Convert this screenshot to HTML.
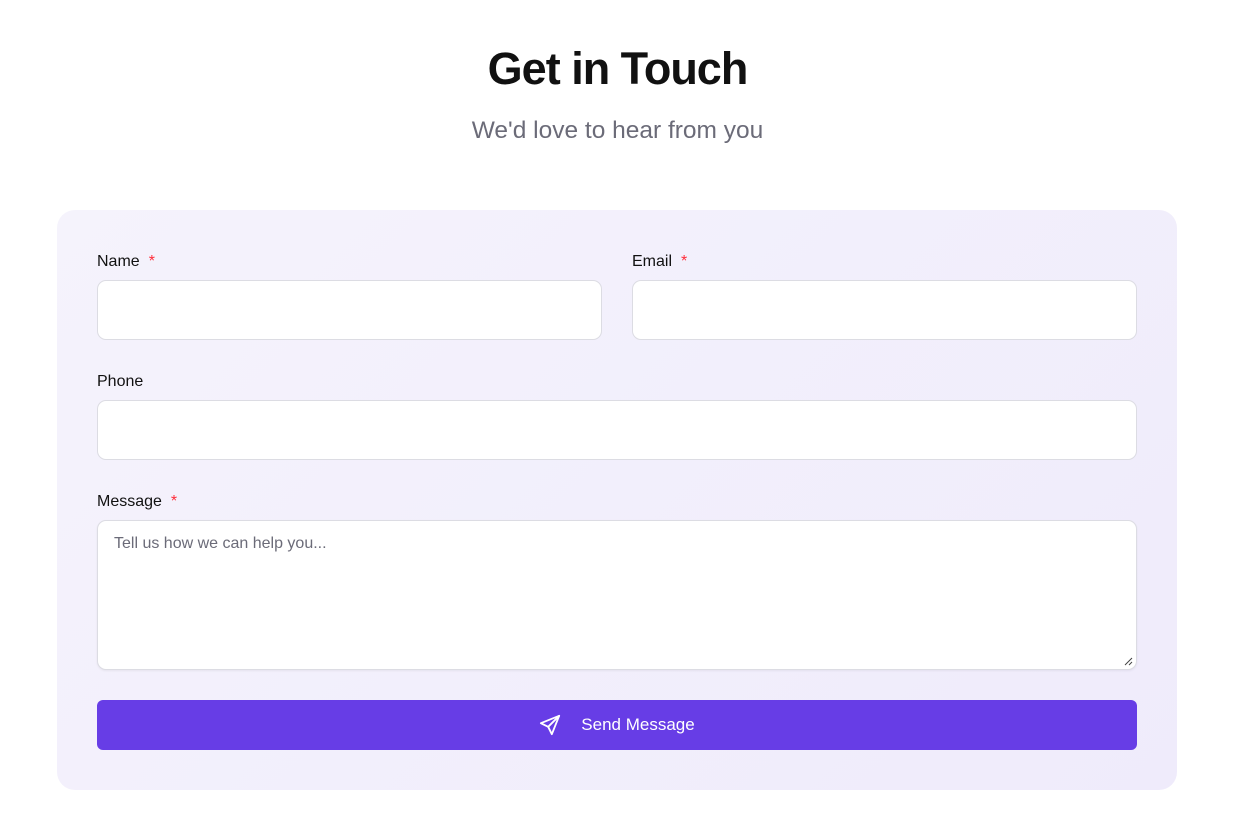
<!DOCTYPE html>
<html><head><meta charset="utf-8"><style>
*{box-sizing:border-box;margin:0;padding:0}
body{width:1255px;height:817px;background:#fff;font-family:"Liberation Sans",sans-serif;position:relative;overflow:hidden}
h1{position:absolute;top:43px;left:0;width:1235px;text-align:center;font-size:45px;font-weight:bold;color:#111;letter-spacing:-1px}
.sub{position:absolute;top:117px;left:0;width:1235px;text-align:center;font-size:24.5px;color:#6b6b78}
.card{position:absolute;left:57px;top:210px;width:1120px;height:580px;border-radius:18px;background:linear-gradient(135deg,#f5f3fc,#efebfb)}
.lbl{position:absolute;font-size:16px;color:#111}
.lbl b{color:#ff2d3a;font-weight:normal;margin-left:9px}
.in{position:absolute;background:#fff;border:1px solid #dcdce3;border-radius:9px;height:60px}
.ta{height:150px;box-shadow:0 1px 2px rgba(0,0,0,.06)}
.ph{position:absolute;left:16px;top:14px;font-size:16px;color:#6b6b78}
.btn{position:absolute;left:97px;top:700px;width:1040px;height:50px;background:#673de6;border-radius:6px;color:#fff;font-size:17px;display:flex;align-items:center;justify-content:center}
</style></head><body>
<h1>Get in Touch</h1>
<div class="sub">We'd love to hear from you</div>
<div class="card"></div>
<div class="lbl" style="left:97px;top:253px">Name<b>*</b></div>
<div class="lbl" style="left:632px;top:253px">Email<b>*</b></div>
<div class="in" style="left:97px;top:280px;width:505px"></div>
<div class="in" style="left:632px;top:280px;width:505px"></div>
<div class="lbl" style="left:97px;top:373px">Phone</div>
<div class="in" style="left:97px;top:400px;width:1040px"></div>
<div class="lbl" style="left:97px;top:493px">Message<b>*</b></div>
<div class="in ta" style="left:97px;top:520px;width:1040px"><div class="ph">Tell us how we can help you...</div>
<svg style="position:absolute;right:3px;bottom:3px" width="9" height="9" viewBox="0 0 9 9"><path d="M8 1L1 8M8 5L5 8" stroke="#444" stroke-width="1"/></svg></div>
<div class="btn"><svg width="22" height="22" viewBox="0 0 24 24" fill="none" stroke="#fff" stroke-width="2" stroke-linejoin="round" stroke-linecap="round" style="margin-right:20px"><path d="M22 2L2 10l8 4 4 8z"/><path d="M22 2L10 14"/></svg>Send Message</div>
</body></html>
